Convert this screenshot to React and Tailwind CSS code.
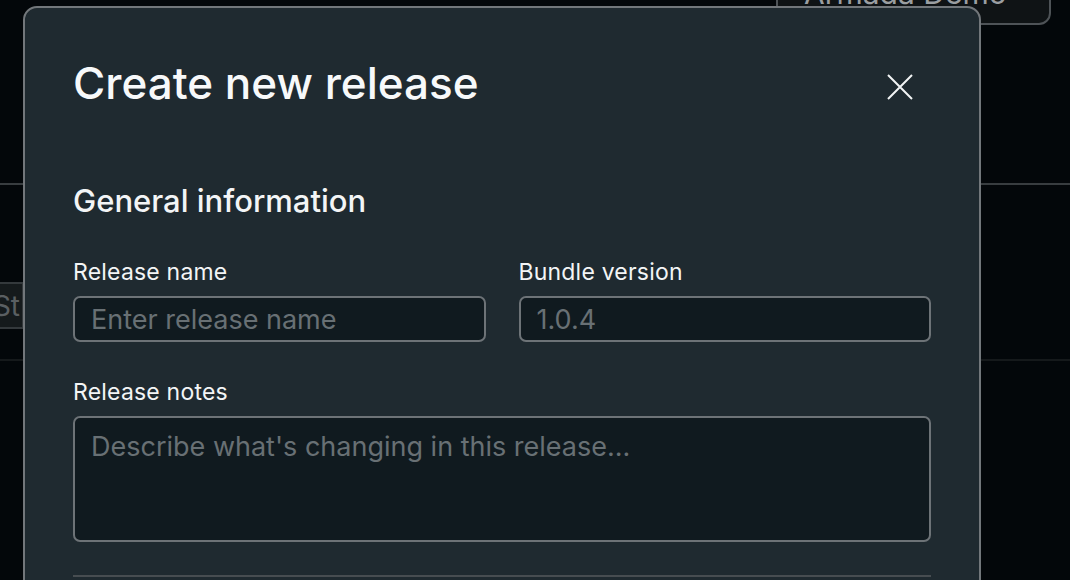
import { useState } from "react";

const Field = ({ label, placeholder, value, onChange }) => (
  <div className="flex flex-col">
    <label className="text-[23px] leading-[28px] tracking-[0.2px] text-[#f3f5f6]">{label}</label>
    <input
      type="text"
      className="mt-[10px] h-[46px] w-full rounded-[7px] border-2 border-[#6d7377] bg-[#101a1f] px-[16px] text-[27px] text-[#e8ecee] placeholder:text-[#687074] outline-none"
      placeholder={placeholder}
      value={value}
      onChange={onChange}
    />
  </div>
);

const App = () => {
  const [name, setName] = useState("");
  const [version, setVersion] = useState("");
  const [notes, setNotes] = useState("");

  return (
    <div
      className="relative h-[580px] w-[1070px] overflow-hidden bg-[#03070a]"
      style={{ fontFamily: "Inter, 'Noto Sans', sans-serif" }}
    >
      {/* page behind the dialog */}
      <div className="flex h-[185px] justify-end border-b-2 border-[#383d40] pr-[19px]">
        <div className="-mt-[20px] flex h-[45px] w-[275px] items-start rounded-[12px] border-2 border-[#4e5357] bg-[#0f1315] pl-[26px]">
          <span className="-mt-[7px] text-[30px] leading-[36px] text-[#9a9ea1]">Armada Demo</span>
        </div>
      </div>
      <div className="flex h-[176px] items-end border-b-2 border-[#15191b] pb-[30px]">
        <div className="-ml-[40px] flex h-[47px] w-[64px] items-center justify-end border-2 border-[#34393c] bg-[#151a1c] pr-[2px]">
          <span className="text-[28px] text-[#5a5f62]">St</span>
        </div>
      </div>

      {/* dialog */}
      <div className="absolute left-[23px] top-[6px] h-[600px] w-[958px] rounded-[14px] border-2 border-[#72777b] bg-[#1f2a30] px-[48px] pt-[47px]">
        <div className="flex items-start justify-between">
          <h1 className="text-[44px] font-medium leading-[56px] text-[#f7f9fa]">Create new release</h1>
          <button className="mr-[18px] mt-[19px] text-[#f2f4f5]" aria-label="Close">
            <svg width="26" height="26" viewBox="0 0 26 26" fill="none" stroke="currentColor" strokeWidth="2">
              <path d="M1 1 25 25M25 1 1 25" />
            </svg>
          </button>
        </div>

        <h2 className="mt-[72px] text-[31px] font-medium leading-[36px] text-[#f3f5f6]">General information</h2>

        <div className="mt-[39px] grid grid-cols-2 gap-[33px]">
          <Field
            label="Release name"
            placeholder="Enter release name"
            value={name}
            onChange={(e) => setName(e.target.value)}
          />
          <Field
            label="Bundle version"
            placeholder="1.0.4"
            value={version}
            onChange={(e) => setVersion(e.target.value)}
          />
        </div>

        <div className="mt-[36px] flex flex-col">
          <label className="text-[23px] leading-[28px] tracking-[0.2px] text-[#f3f5f6]">Release notes</label>
          <textarea
            className="mt-[10px] h-[126px] w-full resize-none rounded-[7px] border-2 border-[#6d7377] bg-[#101a1f] px-[16px] py-[12px] text-[27px] leading-[34px] text-[#e8ecee] placeholder:text-[#687074] outline-none"
            placeholder="Describe what's changing in this release..."
            value={notes}
            onChange={(e) => setNotes(e.target.value)}
          />
        </div>

        <div className="mt-[33px] h-[2px] bg-[#474d51]" />
      </div>
    </div>
  );
};

export default App;
